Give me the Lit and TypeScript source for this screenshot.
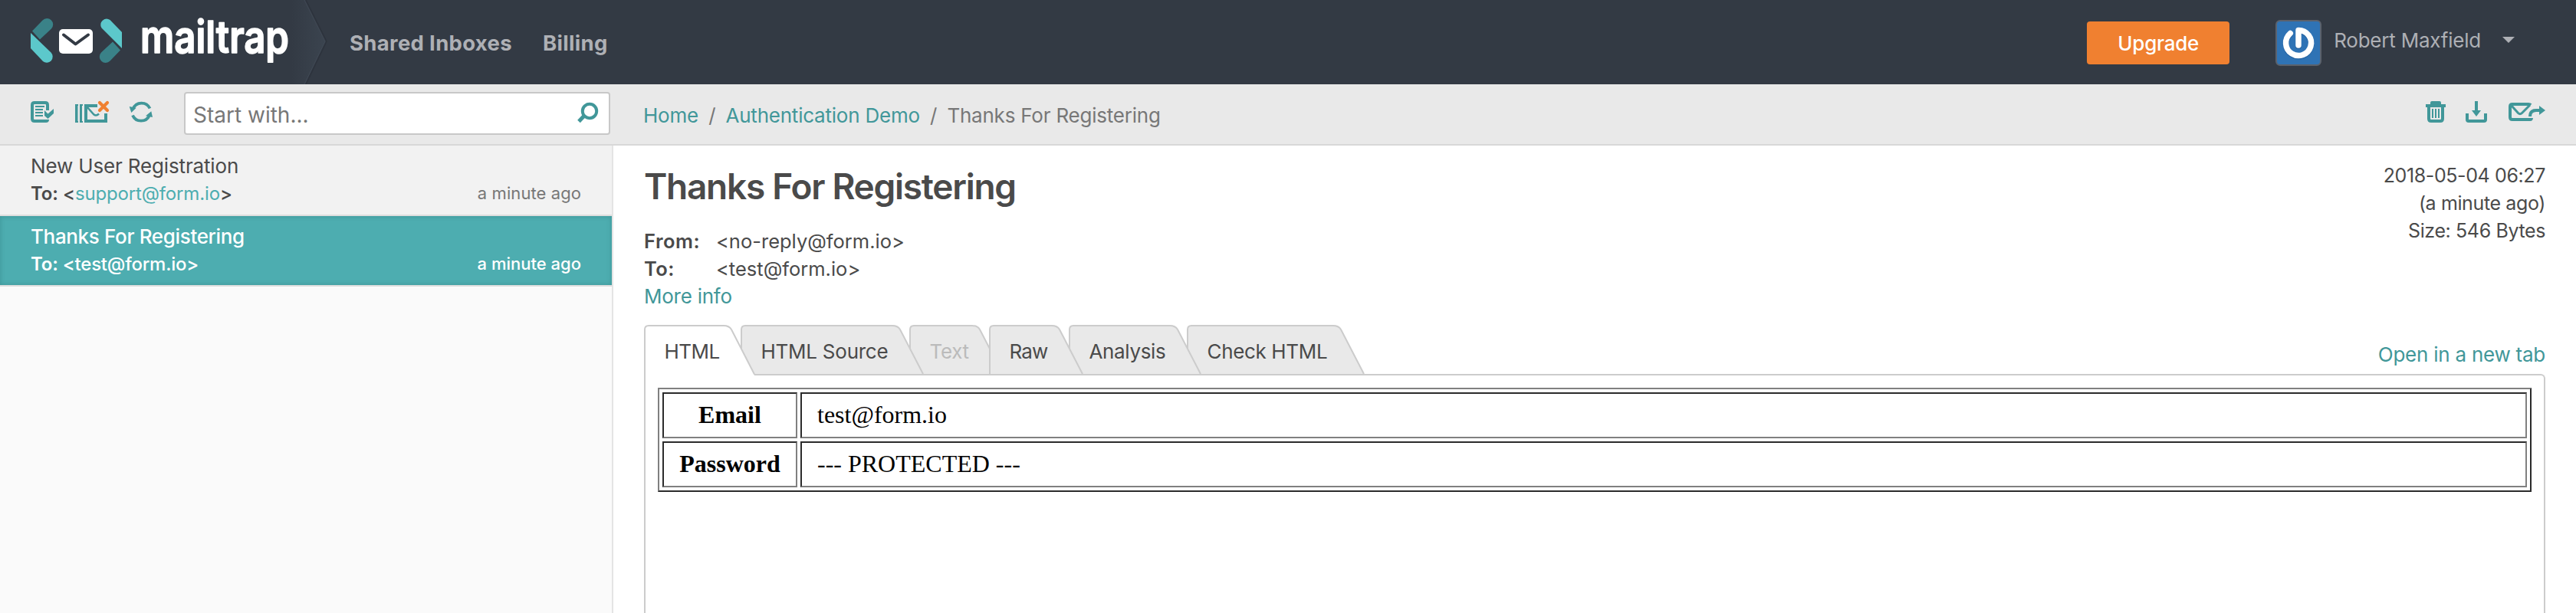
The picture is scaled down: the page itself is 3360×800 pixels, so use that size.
import { LitElement, html, svg, css } from "lit";
import { customElement } from "lit/decorators.js";
import { classMap } from "lit/directives/class-map.js";

interface Tab { label: string; width: number; kind: string; spacing: string }

const tabs: Tab[] = [
  { label: "HTML", width: 144, kind: "active", spacing: "-0.5px" },
  { label: "HTML Source", width: 238, kind: "", spacing: "-0.25px" },
  { label: "Text", width: 122, kind: "disabled", spacing: "-0.34px" },
  { label: "Raw", width: 122, kind: "raised", spacing: "-0.9px" },
  { label: "Analysis", width: 172, kind: "", spacing: "-0.35px" },
  { label: "Check HTML", width: 231, kind: "", spacing: "-0.35px" },
];

const logo = svg`
  <defs>
    <linearGradient id="fade" x1="380" x2="424" y1="0" y2="0" gradientUnits="userSpaceOnUse">
      <stop offset="0" stop-color="#333a44"/><stop offset="1" stop-color="#3b444f"/>
    </linearGradient>
  </defs>
  <path d="M370 0H397L424 54L397 110H370Z" fill="url(#fade)"/>
  <path d="M399 0L426 54L399 110" fill="none" stroke="#2d333d" stroke-width="1.5"/>
  <path d="M397 0L424 54L397 110" fill="none" stroke="#414a56" stroke-width="1"/>
  <path d="M42 40.5L55.5 26.5A7.8 7.8 0 0 1 67 37.5L52 51.5Z" fill="#3a8288"/>
  <path d="M40 43L66.5 68.5A7.8 7.8 0 0 1 56 80L40 63Z" fill="#5cc8cb"/>
  <path d="M159 63L132.500 36.5A7.8 7.8 0 0 1 143.500 26L159 42Z" fill="#5cc8cb"/>
  <path d="M157 65.500L143.500 79.500A7.8 7.8 0 0 1 132 68.5L147 54.5Z" fill="#3a8288"/>
  <rect x="77" y="38" width="44" height="32" rx="5" fill="#fff"/>
  <path d="M83 45.500L98.500 57.500L115 45.500" fill="none" stroke="#333a44" stroke-width="4" stroke-linecap="round" stroke-linejoin="round"/>
  <text x="183" y="69" textLength="194" lengthAdjust="spacingAndGlyphs" class="word">mailtrap</text>`;

@customElement("mail-tab")
class MailTab extends LitElement {
  static properties = { tab: { attribute: false } };
  declare tab: Tab;
  static styles = css`
    :host { display: block; }
    .tab { display: grid; height: 66px; box-sizing: border-box; }
    .tab > * { grid-area: 1 / 1; }
    .label { height: 64px; line-height: 64px; padding: 3px 0 0 26.5px; font-size: 26px; color: #4a4a4a; white-space: nowrap; box-sizing: border-box; }
    .disabled .label { color: #bbb; }
    .shape { display: block; overflow: visible; fill: #e9e9e9; stroke: #ccc; stroke-width: 2; }
    .active .shape { fill: #fff; }
    .base { stroke: none; }
  `;
  render() {
    const { label, width: w, kind, spacing } = this.tab;
    const knee = w - 32;
    const outline = `M1 66V6Q1 1 6 1H${knee - 8}Q${knee - 1} 1 ${knee + 2} 6L${w} 64.500`;
    return html`<div class=${classMap({ tab: true, active: kind === "active", disabled: kind === "disabled" })}>
      <svg class="shape" width=${w} height="66">
        ${kind === "active"
          ? svg`<path class="base" d="M2 66V4H${knee}L${w} 66Z"/><path d=${outline}/>`
          : svg`<path class="base" d=${outline + "H1Z"}/><path d=${`M1 64V6Q1 1 6 1H${knee - 8}Q${knee - 1} 1 ${knee + 2} 6L${w} 64`} fill="none"/><path d="M0 65H${w}"/>`}
      </svg>
      <span class="label" style="letter-spacing:${spacing}">${label}</span>
    </div>`;
  }
}

@customElement("app-root")
class AppRoot extends LitElement {
  static styles = css`
    :host { display: flex; flex-direction: column; height: 800px; overflow: hidden; background: #fff; color: #4a4a4a; font: 26px/36px Inter, "Liberation Sans", sans-serif; white-space: nowrap; }
    * { box-sizing: border-box; }
    svg { display: block; flex: none; }
    a { color: #419799; }
    .header { display: flex; align-items: center; height: 110px; flex: none; background: #333a44; color: #aeb0b5; }
    .word { font: 600 58px Inter, sans-serif; fill: #fff; stroke: #fff; stroke-width: 1.6; stroke-linejoin: round; }
    .nav { display: flex; gap: 40px; padding: 2px 0 0 26px; flex: 1; font-size: 27.5px; font-weight: 700; letter-spacing: .32px; }
    .account { display: flex; align-items: center; padding: 2px 80px 0 0; }
    .upgrade { width: 186px; height: 56px; line-height: 57px; border-radius: 4px; background: #f08030; color: #fff; text-align: center; font-weight: 500; letter-spacing: -.26px; margin-right: 60px; }
    .user { margin: 0 28px 7px 16px; letter-spacing: -.22px; }
    .caret { margin-bottom: 8px; }
    .toolbar { display: flex; align-items: center; height: 80px; flex: none; background: #e9e9e9; border-bottom: 2px solid #d8d8d8; fill: #419799; stroke: #419799; }
    .toolbar svg { overflow: visible; margin-bottom: 6px; }
    .left { display: flex; align-items: center; width: 800px; padding: 0 4px 0 40px; }
    .clear { margin-left: 28px; }
    .refresh { margin-left: 27px; }
    .download { margin-left: 26px; }
    .toolbar .forward { margin: 0 40px 6px 28px; }
    .search { display: flex; align-items: center; justify-content: space-between; width: 556px; height: 56px; margin-bottom: 2px; margin-left: auto; padding: 3px 13px 0 10px; background: #fff; border: 2px solid #c8c8c8; border-radius: 4px; font-size: 28px; color: #777; }
    .toolbar .search svg { margin-bottom: 4px; }
    .crumbs { display: flex; flex: 1; padding: 3px 0 0 39px; color: #777; letter-spacing: -.22px; }
    .sep { width: 35.5px; text-align: center; }
    .main { display: flex; flex: 1; min-height: 0; }
    .list { width: 800px; flex: none; background: #fafafa; border-right: 2px solid #e4e4e4; }
    .item { height: 92px; padding: 9px 40px 0; background: #f2f2f2; border-bottom: 2px solid #dedede; letter-spacing: -.15px; }
    .row { display: flex; justify-content: space-between; }
    .to { font-size: 24px; font-weight: 500; }
    .bold { font-weight: 600; }
    .regular { font-weight: 400; color: #4dadb0; }
    .time { font-size: 22px; line-height: 34px; color: #777; letter-spacing: .08px; }
    .selected { background: #4dadb0; color: #fff; font-weight: 500; letter-spacing: -.35px; box-shadow: inset 0 0 6px rgba(0, 60, 60, .22); }
    .selected .time { color: #fff; letter-spacing: 0; }
    .selected .to { letter-spacing: -.22px; }
    .message { display: flex; flex-direction: column; flex: 1; padding: 0 40px; min-width: 0; }
    .summary { display: flex; justify-content: space-between; }
    .title { margin: 25px 0 26px; font-size: 46px; line-height: 56px; font-weight: 600; letter-spacing: -1.28px; }
    .field { display: flex; font-size: 25.500px; }
    .name { width: 94px; font-weight: 600; letter-spacing: .5px; }
    .more { letter-spacing: -.25px; }
    .meta { padding-top: 21px; text-align: right; font-size: 25px; }
    .meta div { letter-spacing: -.38px; }
    .tabs { display: flex; height: 64px; margin-top: 19px; align-items: flex-start; flex: none; }
    .tabs mail-tab { margin-right: -18px; position: relative; }
    .open { margin-left: auto; padding-top: 20.500px; letter-spacing: -.24px; }
    .panel { flex: 1; border: 2px solid #ccc; border-bottom: 0; border-top-right-radius: 6px; padding: 16px; }
    table { width: 100%; border-spacing: 4px; border: 2px solid; border-color: #808080 #2b2b2b #2b2b2b #808080; font: 32px/36px "Liberation Serif", serif; color: #000; table-layout: fixed; }
    th, td { height: 60px; border: 2px solid; border-color: #2b2b2b #808080 #808080 #2b2b2b; padding: 9px 20px 11px; }
    th { width: 176px; }
    td { text-align: left; }
  `;

  render() {
    return html`
      <div class="header">
        <svg width="430" height="110">${logo}</svg>
        <div class="nav"><span>Shared Inboxes</span><span>Billing</span></div>
        <div class="account">
          <div class="upgrade">Upgrade</div>
          <svg width="60" height="60">
            <rect x="1" y="1" width="58" height="58" rx="5" fill="#2f73b5" stroke="#5b626d" stroke-width="2"/>
            <path d="M19.300 18.500A16.500 16.500 0 1 0 30 14.500V34" fill="none" stroke="#1d5792" stroke-width="8" stroke-linecap="round" stroke-linejoin="round" opacity=".6"/>
            <path d="M19.300 17.500A16.500 16.500 0 1 0 30 13.500V33" fill="none" stroke="#fff" stroke-width="7.500" stroke-linecap="round" stroke-linejoin="round"/>
          </svg>
          <span class="user">Robert Maxfield</span>
          <svg class="caret" width="16" height="8"><path d="M0 0H16L8 8Z" fill="#aeb0b5"/></svg>
        </div>
      </div>
      <div class="toolbar">
        <div class="left">
          <svg width="30" height="28">
            <path d="M22 12V5Q22 2 19 2H5Q2 2 2 5V23Q2 26 5 26H20Q22 26 22 24" fill="none" stroke-width="4"/>
            <path d="M6 7H18M6 11H16M6 15H16M6 19H16" fill="none" stroke-width="2"/>
            <path d="M18 12L22.500 16.500L30 10V16L22.500 23L18 19Z" stroke="none"/>
          </svg>
          <svg class="clear" width="44" height="28">
            <path d="M0 4H4V6H3.500V26H4V28H0ZM6 4H10V6H9V26H10V28H6ZM12 4H16V28H12Z" stroke="none"/>
            <path d="M29 6H14V26H40V16" fill="none" stroke-width="4"/>
            <path d="M15 7L24.500 17.500Q27.500 20 31 16.500" fill="none" stroke-width="2.500"/>
            <path d="M32 2L42 12M42 2L32 12" fill="none" stroke="#f08030" stroke-width="4.200" stroke-linecap="round"/>
          </svg>
          <svg class="refresh" width="30" height="28">
            <path d="M4.500 10A12 12 0 0 1 26.500 9.500M4 18.500A12 12 0 0 0 26 18.500" fill="none" stroke-width="3.800"/>
            <path d="M-.300 7L8.700 8.700L2.300 15ZM30 21L21 19.300L28.300 13.300Z" stroke="none"/>
          </svg>
          <div class="search"><span>Start with...</span>
            <svg width="28" height="28"><path d="M9 17L2 24.500" stroke-width="5" fill="none"/><circle cx="16" cy="11" r="9.200" fill="none" stroke-width="4"/></svg>
          </div>
        </div>
        <div class="crumbs"><a>Home</a><span class="sep">/</span><a>Authentication Demo</a><span class="sep">/</span><span>Thanks For Registering</span></div>
        <svg width="26" height="28">
          <path d="M0 4H6V2Q6 0 8 0H18Q20 0 20 2V4H26V8H0Z" stroke="none"/>
          <path d="M4 8V23Q4 26 7 26H19Q22 26 22 23V8" fill="none" stroke-width="4"/>
          <path d="M9 10V22M13 10V22M17 10V22" stroke-width="2"/>
        </svg>
        <svg class="download" width="28" height="28">
          <path d="M2 16V24Q2 26 4 26H24Q26 26 26 24V16" fill="none" stroke-width="4"/>
          <path d="M12 0H16V12H20L14 20L8 12H12Z" stroke="none"/>
        </svg>
        <svg class="forward" width="48" height="28">
          <path d="M29 5V5Q28 4 26 4H5Q2 4 2 7V21Q2 24 5 24H28Q30 24 30 22" fill="none" stroke-width="4"/>
          <path d="M4 6L12.500 15.500Q15 18 17.500 15.500L28 5" fill="none" stroke-width="3"/>
          <path d="M28 20Q28 12 36 12H41" fill="none" stroke-width="4"/>
          <path d="M40 6L48 12L40 18Z" stroke="none"/>
        </svg>
      </div>
      <div class="main">
        <div class="list">
          <div class="item">
            <div>New User Registration</div>
            <div class="row"><span class="to"><span class="bold">To:</span> &lt;<span class="regular">support@form.io</span>&gt;</span><span class="time">a minute ago</span></div>
          </div>
          <div class="item selected">
            <div>Thanks For Registering</div>
            <div class="row"><span class="to"><span class="bold">To:</span> &lt;test@form.io&gt;</span><span class="time">a minute ago</span></div>
          </div>
        </div>
        <div class="message">
          <div class="summary">
            <div>
              <div class="title">Thanks For Registering</div>
              <div class="field"><span class="name">From:</span><span>&lt;no-reply@form.io&gt;</span></div>
              <div class="field"><span class="name">To:</span><span>&lt;test@form.io&gt;</span></div>
              <a class="more">More info</a>
            </div>
            <div class="meta"><div>2018-05-04 06:27</div><div>(a minute ago)</div><div>Size: 546 Bytes</div></div>
          </div>
          <div class="tabs">
            ${tabs.map((tab, i) => html`<mail-tab .tab=${tab} style="z-index:${tab.kind === "raised" ? 9 : 8 - i}"></mail-tab>`)}
            <a class="open">Open in a new tab</a>
          </div>
          <div class="panel">
            <table>
              <tr><th>Email</th><td>test@form.io</td></tr>
              <tr><th>Password</th><td>--- PROTECTED ---</td></tr>
            </table>
          </div>
        </div>
      </div>`;
  }
}
